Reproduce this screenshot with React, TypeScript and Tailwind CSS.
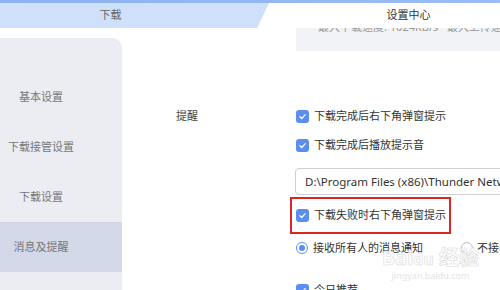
import React from "react";

const font = { fontFamily: '"Noto Sans", "Noto Sans CJK SC", sans-serif' };

function CheckBox() {
  return (
    <span className="flex h-[13px] w-[13px] shrink-0 items-center justify-center rounded-[3px] bg-[#5b8ef0]">
      <svg width="9" height="9" viewBox="0 0 10 10" fill="none">
        <path d="M2 5.2 L4.2 7.2 L8 3" stroke="white" strokeWidth="1.4" strokeLinecap="round" strokeLinejoin="round" />
      </svg>
    </span>
  );
}

function Radio({ on }: { on?: boolean }) {
  return (
    <span
      className={
        on
          ? "flex h-[12px] w-[12px] shrink-0 items-center justify-center rounded-full border border-[#5b8ef0] bg-white"
          : "flex h-[12px] w-[12px] shrink-0 items-center justify-center rounded-full border border-[#bdbdbd] bg-white"
      }
    >
      {on && <span className="h-[6px] w-[6px] rounded-full bg-[#5b8ef0]" />}
    </span>
  );
}

function CheckRow({ label }: { label: string }) {
  return (
    <div className="flex h-[24px] shrink-0 items-center gap-[5px] text-[11px] text-[#333]">
      <CheckBox />
      <span>{label}</span>
    </div>
  );
}

export default function App() {
  const menu = ["基本设置", "下载接管设置", "下载设置", "消息及提醒", "高级设置"];

  return (
    <div className="relative h-[290px] w-[500px] overflow-hidden bg-white" style={font}>
      {/* ===== 顶部标签栏 ===== */}
      <div className="h-[3px] bg-gradient-to-r from-[#8db1f2] to-[#9bbcf5]" />
      <div className="flex h-[25px] bg-[#cfe0fb] text-[11px]">
        <div className="flex w-[257px] items-center justify-center pr-[36px] text-[#666]">下载</div>
        <div
          className="flex flex-1 items-center justify-center rounded-tl-[6px] bg-white pl-[60px] text-[#333]"
          style={{ clipPath: "polygon(12px 0, 100% 0, 100% 100%, 0 100%)" }}
        >
          设置中心
        </div>
      </div>

      {/* ===== 본문 ===== */}
      <div className="flex">
        {/* 左侧菜单 */}
        <div className="mt-[10px] w-[122px] shrink-0 rounded-tr-[10px] bg-[#ebedf2] pt-[34px]">
          {menu.map((m) => (
            <div
              key={m}
              className={
                m === "消息及提醒"
                  ? "flex h-[50px] items-center justify-center bg-[#d3d9e9] pr-[40px] text-[11px] text-[#777]"
                  : "flex h-[50px] items-center justify-center pr-[40px] text-[11px] text-[#777]"
              }
            >
              {m}
            </div>
          ))}
        </div>

        {/* 标签列 */}
        <div className="w-[174px] shrink-0 pl-[54px] pt-[76px]">
          <div className="flex h-[24px] items-center text-[11px] text-[#444]">提醒</div>
        </div>

        {/* 选项列 */}
        <div className="flex flex-1 flex-col">
          <div className="-mr-[40px] h-[23px] shrink-0 overflow-hidden bg-[#f1f3f7] pl-[22px]">
            <div className="-mt-[9px] whitespace-nowrap text-[11px] leading-[16px] text-[#999]">
              最大下载速度: 1024KB/s&nbsp;&nbsp;&nbsp;最大上传速度
            </div>
          </div>

          <div className="mt-[53px]">
            <CheckRow label="下载完成后右下角弹窗提示" />
          </div>
          <div className="mt-[5px]">
            <CheckRow label="下载完成后播放提示音" />
          </div>

          <div className="-mr-[60px] ml-[-1px] mt-[11px] flex h-[27px] shrink-0 items-center overflow-hidden whitespace-nowrap rounded-[4px] border border-[#cfcfcf] pl-[9px] text-[11.5px] text-[#333]">
            D:\Program Files (x86)\Thunder Network\Thunder\Sound\notify.wav
          </div>

          <div className="-ml-[6px] mt-[2px] flex h-[37px] w-[161px] shrink-0 items-center gap-[5px] border-2 border-[#dc2626] pl-[4px] text-[11px] text-[#333]">
            <CheckBox />
            <span>下载失败时右下角弹窗提示</span>
          </div>

          <div className="mt-[4px] flex h-[20px] shrink-0 items-center whitespace-nowrap text-[11px] text-[#333]">
            <Radio on />
            <span className="ml-[5px]">接收所有人的消息通知</span>
            <span className="ml-[38px]">
              <Radio />
            </span>
            <span className="ml-[4px]">不接收消息通知</span>
          </div>

          <div className="mt-[20px]">
            <CheckRow label="今日推荐" />
          </div>
        </div>
      </div>

      {/* 水印 */}
      <div className="pointer-events-none absolute left-[382px] top-[247px] flex flex-col items-center text-white/80">
        <span className="text-[20px] font-bold leading-[22px]" style={{ WebkitTextStroke: "0.6px #d9d9d9" }}>
          Bai<span className="text-[16px]">du</span> 经验
        </span>
        <span className="text-[9px] leading-[12px] text-[#e4e4e4]">jingyan.baidu.com</span>
      </div>
    </div>
  );
}
